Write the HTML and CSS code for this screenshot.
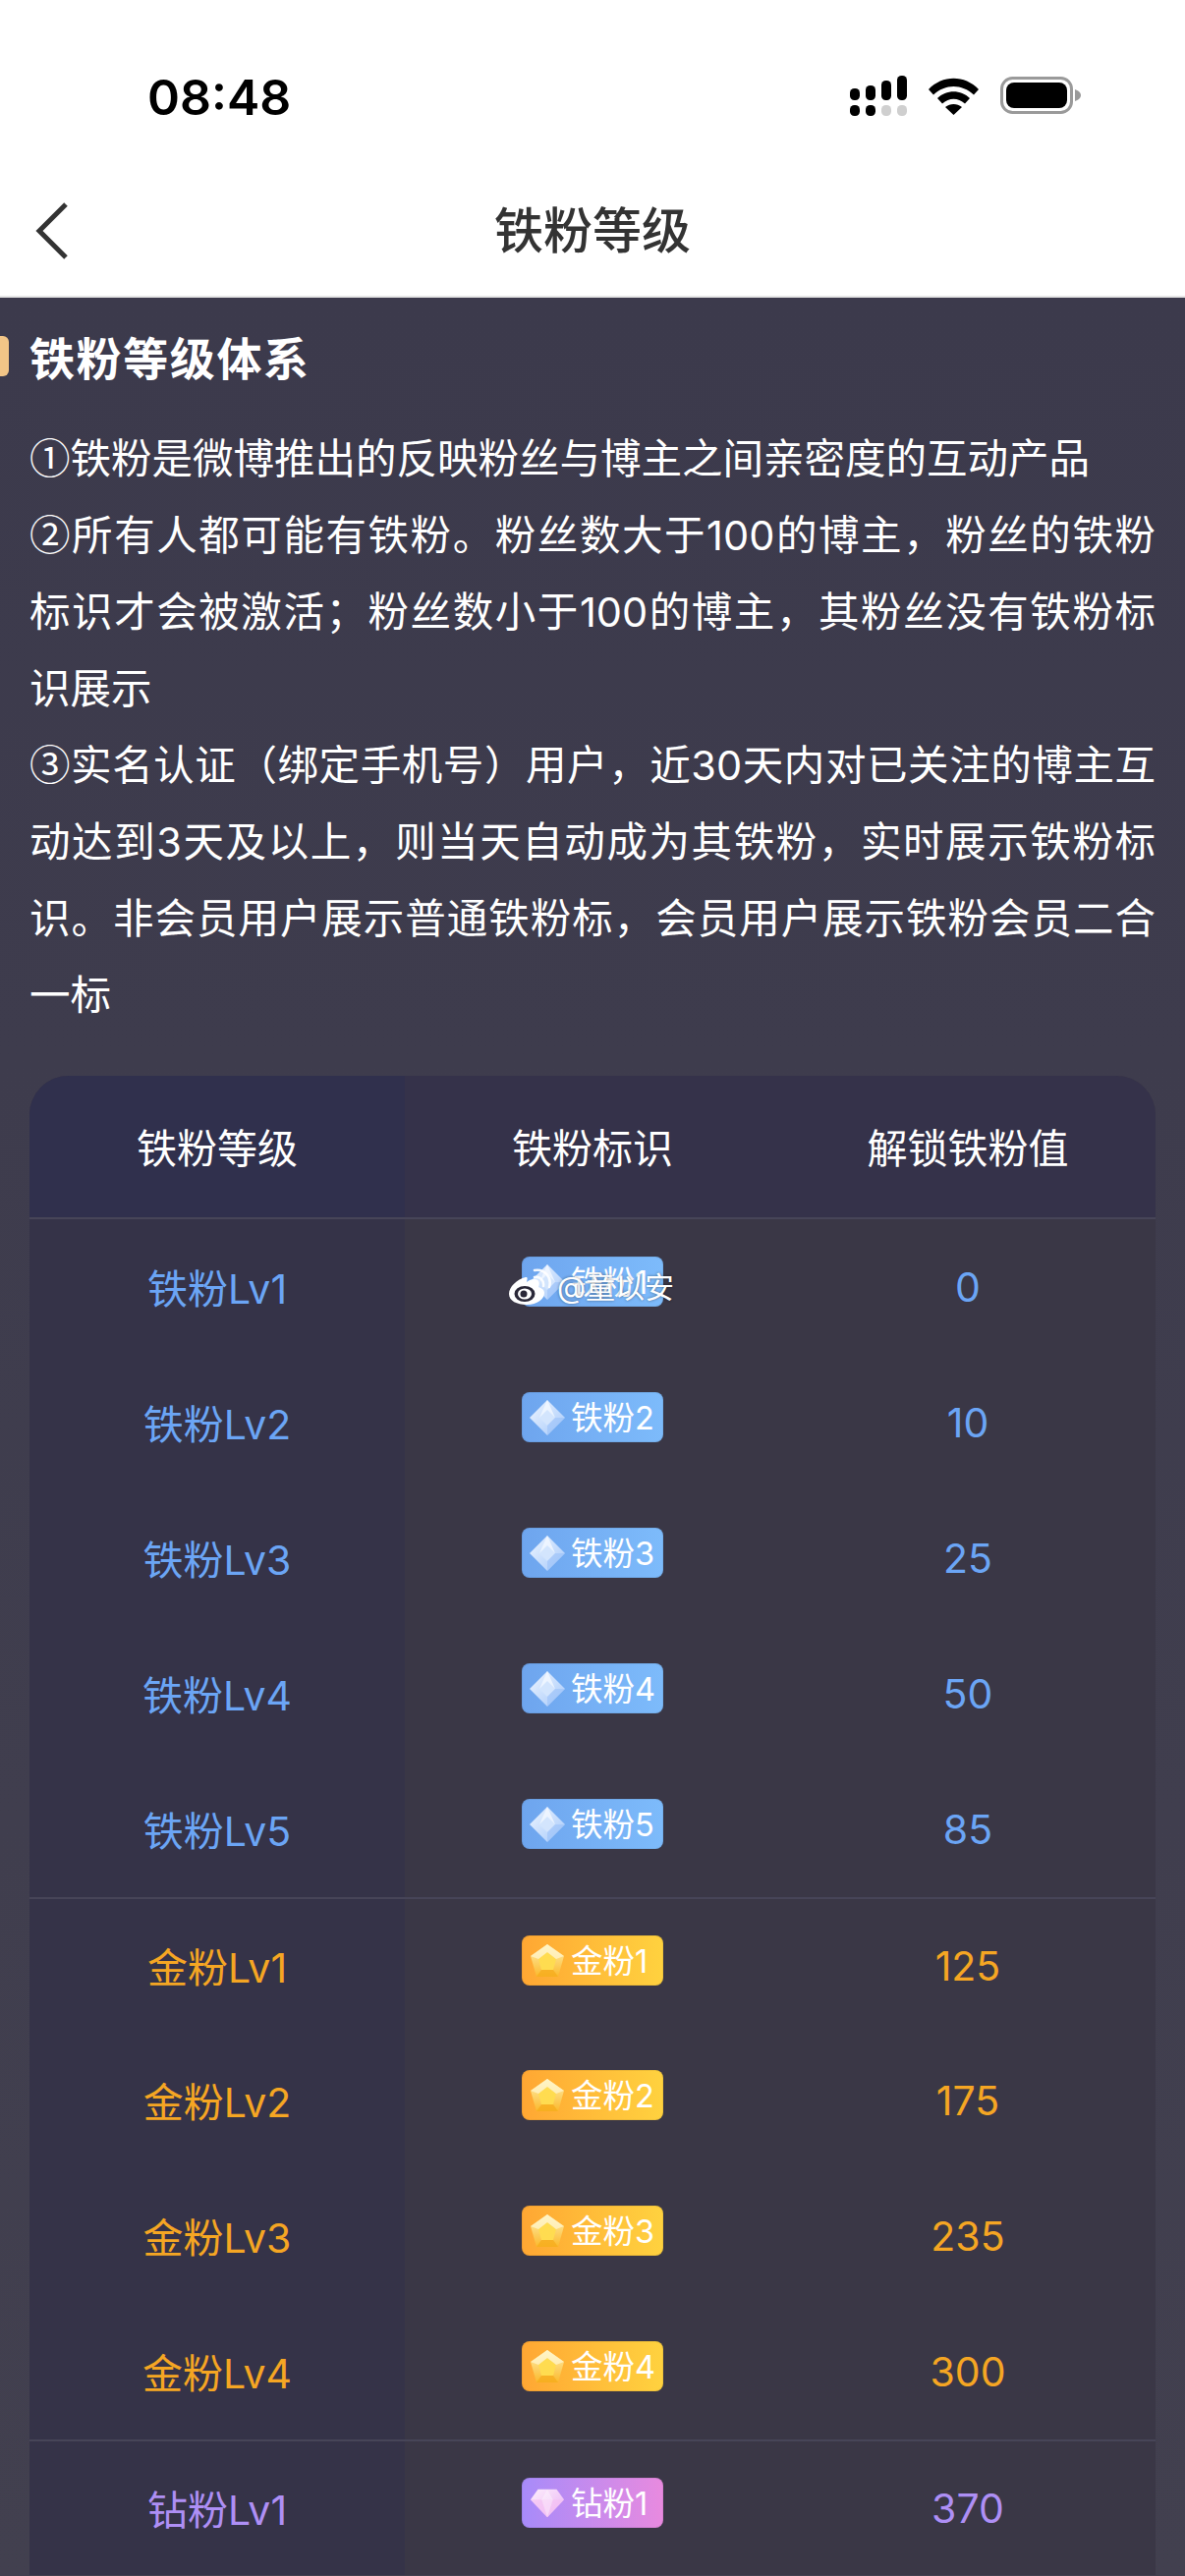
FILE: index.html
```html
<!DOCTYPE html>
<html lang="zh">
<head>
<meta charset="utf-8">
<title>铁粉等级</title>
<link rel="stylesheet" href="styles.css">
</head>
<body>
<svg class="defs" width="0" height="0" aria-hidden="true">
  <defs>
    <linearGradient id="gb" x1="0" y1="0" x2="1" y2="1"><stop offset="0" stop-color="#eef5ff"/><stop offset="1" stop-color="#a6c9fa"/></linearGradient>
    <linearGradient id="gg" x1="0" y1="0" x2="0" y2="1"><stop offset="0" stop-color="#fff0b0"/><stop offset="1" stop-color="#fbb92c"/></linearGradient>
    <linearGradient id="gp" x1="0" y1="0" x2="1" y2="1"><stop offset="0" stop-color="#fdeffc"/><stop offset="1" stop-color="#eab2f4"/></linearGradient>
    <symbol id="gem-blue" viewBox="0 0 36 36">
      <path d="M18 0 36 18 18 36 0 18Z" fill="url(#gb)"/>
      <path d="M18 10 26 18 18 26 10 18Z" fill="#d3e5fd"/>
      <path d="M18 0 26 18 18 10 10 18Z" fill="#f6faff" opacity=".75"/>
      <path d="M18 26 26 18 36 18 18 36Z" fill="#97c0f8" opacity=".55"/>
    </symbol>
    <symbol id="gem-gold" viewBox="0 0 36 36">
      <path d="M18 1 35 13 29 34 7 34 1 13Z" fill="url(#gg)"/>
      <path d="M18 9 27 16 24 27 12 27 9 16Z" fill="#ffdc50"/>
      <path d="M18 1 35 13 27 16 18 9 9 16 1 13Z" fill="#fff6d0" opacity=".7"/>
      <path d="M7 34 12 27 24 27 29 34Z" fill="#f6ad1e" opacity=".8"/>
    </symbol>
    <symbol id="gem-purple" viewBox="0 0 38 34">
      <path d="M9 2 29 2 37 13 19 32 1 13Z" fill="url(#gp)"/>
      <path d="M1 13 37 13 19 32Z" fill="#f3c0f2" opacity=".7"/>
      <path d="M13 13 19 2 25 13 19 32Z" fill="#fff" opacity=".35"/>
    </symbol>
  </defs>
</svg>
<div class="page">
  <header class="top">
    <div class="status">
      <span class="time">08:48</span>
      <div class="status-icons">
        <svg class="signal" width="58" height="41" viewBox="0 0 58 41">
          <rect x="0" y="13" width="10" height="12" rx="4.500"/>
          <rect x="16" y="10" width="10" height="15" rx="4.500"/>
          <rect x="32" y="5" width="10" height="20" rx="4.500"/>
          <rect x="48" y="0" width="10" height="25" rx="4.500"/>
          <rect x="0" y="30" width="10" height="11" rx="4.500"/>
          <rect x="16" y="30" width="10" height="11" rx="4.500"/>
          <rect x="32" y="30" width="10" height="11" rx="4.500" fill="#cfcfcf"/>
          <rect x="48" y="30" width="10" height="11" rx="4.500" fill="#cfcfcf"/>
        </svg>
        <svg class="wifi" width="51" height="38" viewBox="0 0 51 38">
          <path d="M0 12C14-3 37-3 51 12L46 17.500C34 6 17 6 5 17.500Z"/>
          <path d="M9 21C18 12 33 12 42 21L37 26.500C30 20 21 20 14 26.500Z"/>
          <path d="M17 30C22 26 29 26 34 30L25.500 38Z"/>
        </svg>
        <svg class="battery" width="82" height="38" viewBox="0 0 82 38">
          <rect x="1.500" y="1.500" width="71" height="35" rx="11" fill="none" stroke="#9a9a9a" stroke-width="3"/>
          <rect x="6" y="6" width="62" height="26" rx="8"/>
          <path d="M76 13C79 14 82 16 82 19 82 22 79 24 76 25Z" fill="#9a9a9a"/>
        </svg>
      </div>
    </div>
    <div class="nav">
      <svg class="back" width="34" height="58" viewBox="0 0 34 58">
        <path d="M31 2 4 29 31 56" fill="none" stroke="#333" stroke-width="5"/>
      </svg>
      <h1 class="nav-title">铁粉等级</h1>
    </div>
  </header>
  <main class="content">
    <h2 class="section-title">铁粉等级体系</h2>
    <div class="intro">
      <p>①铁粉是微博推出的反映粉丝与博主之间亲密度的互动产品</p>
      <p>②所有人都可能有铁粉。粉丝数大于<span class="num">100</span>的博主，粉丝的铁粉标识才会被激活；粉丝数小于<span class="num">100</span>的博主，其粉丝没有铁粉标识展示</p>
      <p>③实名认证（绑定手机号）用户，近<span class="num">30</span>天内对已关注的博主互动达到<span class="num">3</span>天及以上，则当天自动成为其铁粉，实时展示铁粉标识。非会员用户展示普通铁粉标，会员用户展示铁粉会员二合一标</p>
    </div>
    <section class="table">
      <div class="row head">
        <div class="cell first">铁粉等级</div>
        <div class="cell">铁粉标识</div>
        <div class="cell">解锁铁粉值</div>
      </div>
      <div class="row blue">
        <div class="cell first">铁粉Lv1</div>
        <div class="cell"><span class="badge b-blue"><svg class="gem"><use href="#gem-blue"/></svg>铁粉1</span>
          <span class="mark">
            <svg class="mark-logo" width="44" height="38" viewBox="0 0 44 38">
              <path d="M18 9C9 11 1 19 1 26 1 33 9 37 19 37 30 37 37 31 37 25 37 21 33 20 31 19 33 14 31 11 27 11 24 11 21 12 19 14 20 10 20 9 18 9Z" fill="#fff"/>
              <ellipse cx="17" cy="26" rx="10.500" ry="8" fill="#2a2838"/>
              <ellipse cx="17" cy="26" rx="7" ry="5.500" fill="#fff"/>
              <circle cx="16" cy="26" r="3.500" fill="#2a2838"/>
              <path d="M27 9C32 8 37 12 36 18M27 2C37 0 45 9 42 19" fill="none" stroke="#fff" stroke-width="2.500" stroke-linecap="round" opacity=".9"/>
            </svg>@童以安</span>
        </div>
        <div class="cell">0</div>
      </div>
      <div class="row blue">
        <div class="cell first">铁粉Lv2</div>
        <div class="cell"><span class="badge b-blue"><svg class="gem"><use href="#gem-blue"/></svg>铁粉2</span></div>
        <div class="cell">10</div>
      </div>
      <div class="row blue">
        <div class="cell first">铁粉Lv3</div>
        <div class="cell"><span class="badge b-blue"><svg class="gem"><use href="#gem-blue"/></svg>铁粉3</span></div>
        <div class="cell">25</div>
      </div>
      <div class="row blue">
        <div class="cell first">铁粉Lv4</div>
        <div class="cell"><span class="badge b-blue"><svg class="gem"><use href="#gem-blue"/></svg>铁粉4</span></div>
        <div class="cell">50</div>
      </div>
      <div class="row blue">
        <div class="cell first">铁粉Lv5</div>
        <div class="cell"><span class="badge b-blue"><svg class="gem"><use href="#gem-blue"/></svg>铁粉5</span></div>
        <div class="cell">85</div>
      </div>
      <div class="row gold sep">
        <div class="cell first">金粉Lv1</div>
        <div class="cell"><span class="badge b-gold"><svg class="gem"><use href="#gem-gold"/></svg>金粉1</span></div>
        <div class="cell">125</div>
      </div>
      <div class="row gold">
        <div class="cell first">金粉Lv2</div>
        <div class="cell"><span class="badge b-gold"><svg class="gem"><use href="#gem-gold"/></svg>金粉2</span></div>
        <div class="cell">175</div>
      </div>
      <div class="row gold">
        <div class="cell first">金粉Lv3</div>
        <div class="cell"><span class="badge b-gold"><svg class="gem"><use href="#gem-gold"/></svg>金粉3</span></div>
        <div class="cell">235</div>
      </div>
      <div class="row gold">
        <div class="cell first">金粉Lv4</div>
        <div class="cell"><span class="badge b-gold"><svg class="gem"><use href="#gem-gold"/></svg>金粉4</span></div>
        <div class="cell">300</div>
      </div>
      <div class="row purple sep">
        <div class="cell first">钻粉Lv1</div>
        <div class="cell"><span class="badge b-purple"><svg class="gem"><use href="#gem-purple"/></svg>钻粉1</span></div>
        <div class="cell">370</div>
      </div>
    </section>
  </main>
</div>
</body>
</html>
```
FILE: styles.css
```css
* { box-sizing: border-box; }
html, body { margin: 0; padding: 0; }
body { width: 1206px; height: 2622px; overflow: hidden; font-family: Inter, "Noto Sans CJK SC", "Noto Sans", sans-serif; background: #fff; }
.defs { position: absolute; }
.page { height: 2622px; display: flex; flex-direction: column; }
.top { height: 303px; background: #fff; border-bottom: 2px solid #e6e6e6; flex: none; }
.status { height: 196px; padding: 74px 106px 0 150px; display: flex; justify-content: space-between; align-items: flex-start; }
.time { font-weight: 600; font-size: 50px; line-height: 50px; color: #000; }
.status-icons { display: flex; align-items: flex-start; gap: 22px; padding-top: 3px; }
.status-icons svg { display: block; }
.wifi { margin-top: 2px; }
.battery { margin-top: 1px; }
.nav { height: 105px; position: relative; display: flex; justify-content: center; align-items: flex-start; }
.back { position: absolute; left: 36px; top: 10px; }
.nav-title { margin: 0; padding-top: 3px; font-size: 50px; line-height: 72px; font-weight: 500; color: #333; }
.content { flex: 1; padding: 0 30px; background: linear-gradient(180deg, #3c3a4c 0%, #42404f 100%); overflow: hidden; position: relative; }
.section-title { margin: 0; padding-top: 28px; font-size: 46px; line-height: 68px; font-weight: 700; color: #fff; position: relative; letter-spacing: 1.6px; }
.section-title::before { content: ""; position: absolute; left: -30px; top: 39px; width: 9px; height: 41px; background: #f2c587; border-radius: 0 6px 6px 0; }
.intro { margin-top: 26px; color: #fff; font-family: "Noto Sans CJK SC", sans-serif; font-size: 41.500px; line-height: 78px; text-align: justify; }
.intro p { margin: 0; }
.num { font-family: Inter, "Noto Sans CJK SC", sans-serif; line-height: 1; }
.table { margin-top: 46px; border-radius: 40px 40px 0 0; overflow: hidden; background: #3a3746; }
.row { display: grid; grid-template-columns: 382px 382px 382px; height: 138px; font-size: 41px; }
.cell { display: flex; align-items: center; justify-content: center; position: relative; }
.first { background: #353348; padding-bottom: 2px; }
.head { height: 146px; color: #fff; background: #35324a; border-bottom: 2px solid #474558; }
.head .cell { padding-bottom: 2px; }
.head .first { background: #30304d; }
.sep { border-top: 2px solid #474558; }
.blue { color: #6ba5f5; }
.gold { color: #f5a623; }
.purple { color: #ae8ff5; }
.badge { width: 144px; height: 51px; margin-bottom: 11px; padding: 3px 0 0 8px; border-radius: 8px; color: #fff; font-size: 32.500px; line-height: 48px; display: flex; align-items: center; gap: 6px; box-shadow: inset 0 0 0 1px rgba(0, 0, 0, .06); }
.b-blue { background: linear-gradient(90deg, #6ea5ee, #7dbbfb); }
.b-gold { background: linear-gradient(90deg, #ffa733, #ffd23f); }
.b-purple { background: linear-gradient(90deg, #a78bfa, #e88adf); }
.gem { width: 36px; height: 36px; flex: none; margin-top: -3px; }
.mark { position: absolute; left: 105px; top: 50px; display: flex; align-items: center; gap: 6px; color: #fff; font-size: 30px; line-height: 38px; white-space: nowrap; text-shadow: 0 0 3px rgba(0, 0, 0, .45); }
```
